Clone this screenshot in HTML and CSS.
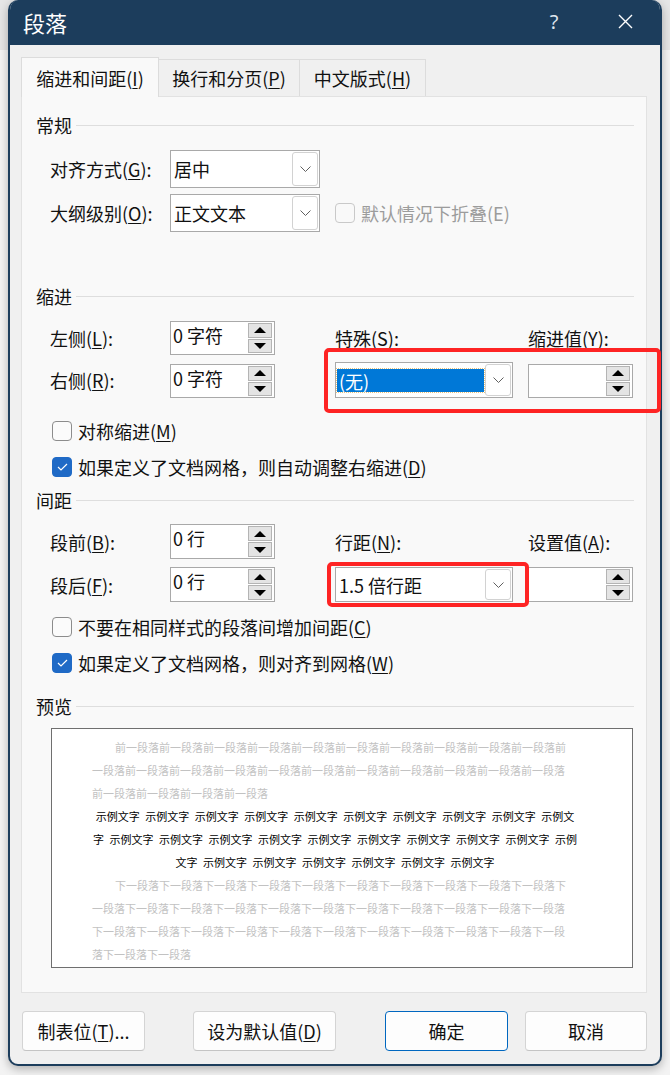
FILE: index.html
```html
<!DOCTYPE html>
<html lang="zh-CN">
<head>
    <meta charset="UTF-8">
    <meta name="viewport" content="width=device-width, initial-scale=1.0">
    <title>段落</title>
    <link rel="stylesheet" href="styles.css">
</head>
<body>
    <div class="dialog">
        <!-- Title bar -->
        <div class="titlebar">
            <span class="title">段落</span>
            <span class="title-btn help">?</span>
            <span class="title-btn close">
                <svg width="15" height="15" viewBox="0 0 15 15"><path d="M1 1 L14 14 M14 1 L1 14" stroke="#fff" stroke-width="1.4" fill="none"/></svg>
            </span>
        </div>

        <div class="tabs">
            <div class="tab active">缩进和间距(<u>I</u>)</div>
            <div class="tab">换行和分页(<u>P</u>)</div>
            <div class="tab">中文版式(<u>H</u>)</div>
        </div>

        <div class="panel">
            <!-- 常规 -->
            <div class="sec-title first">常规</div>
            <div class="grid-general">
                <span class="label">对齐方式(<u>G</u>):</span>
                <div class="combo">
                    <span class="combo-text">居中</span>
                    <span class="drop"><svg width="11" height="6" viewBox="0 0 11 6"><path d="M0.5 0.5 L5.5 5.5 L10.5 0.5" fill="none" stroke="#606060" stroke-width="1"/></svg></span>
                </div>
                <span></span>
                <span class="label">大纲级别(<u>O</u>):</span>
                <div class="combo">
                    <span class="combo-text">正文文本</span>
                    <span class="drop"><svg width="11" height="6" viewBox="0 0 11 6"><path d="M0.5 0.5 L5.5 5.5 L10.5 0.5" fill="none" stroke="#606060" stroke-width="1"/></svg></span>
                </div>
                <div class="check disabled collapse">
                    <span class="box"></span>
                    <span>默认情况下折叠(E)</span>
                </div>
            </div>

            <!-- 缩进 -->
            <div class="sec-title indent-title">缩进</div>
            <div class="grid-fields indent-grid">
                <span class="label">左侧(<u>L</u>):</span>
                <div class="spin">
                    <span class="spin-text">0 字符</span>
                    <span class="spin-btns"><span class="up"></span><span class="down"></span></span>
                </div>
                <span class="label">特殊(<u>S</u>):</span>
                <span class="label">缩进值(<u>Y</u>):</span>

                <span class="label">右侧(<u>R</u>):</span>
                <div class="spin">
                    <span class="spin-text">0 字符</span>
                    <span class="spin-btns"><span class="up"></span><span class="down"></span></span>
                </div>
                <div class="combo wide">
                    <span class="combo-text selected">(无)</span>
                    <span class="drop"><svg width="11" height="6" viewBox="0 0 11 6"><path d="M0.5 0.5 L5.5 5.5 L10.5 0.5" fill="none" stroke="#606060" stroke-width="1"/></svg></span>
                </div>
                <div class="spin">
                    <span class="spin-text"></span>
                    <span class="spin-btns"><span class="up"></span><span class="down"></span></span>
                </div>
            </div>
            <div class="checks indent-checks">
                <div class="check">
                    <span class="box"></span>
                    <span>对称缩进(<u>M</u>)</span>
                </div>
                <div class="check">
                    <span class="box on"><svg width="11" height="8" viewBox="0 0 11 8"><path d="M1 4 L4 7 L10 1" fill="none" stroke="#fff" stroke-width="1.2"/></svg></span>
                    <span>如果定义了文档网格，则自动调整右缩进(<u>D</u>)</span>
                </div>
            </div>

            <!-- 间距 -->
            <div class="sec-title spacing-title">间距</div>
            <div class="grid-fields spacing-grid">
                <span class="label">段前(<u>B</u>):</span>
                <div class="spin">
                    <span class="spin-text">0 行</span>
                    <span class="spin-btns"><span class="up"></span><span class="down"></span></span>
                </div>
                <span class="label">行距(<u>N</u>):</span>
                <span class="label">设置值(<u>A</u>):</span>

                <span class="label">段后(<u>F</u>):</span>
                <div class="spin">
                    <span class="spin-text">0 行</span>
                    <span class="spin-btns"><span class="up"></span><span class="down"></span></span>
                </div>
                <div class="combo wide">
                    <span class="combo-text">1.5 倍行距</span>
                    <span class="drop"><svg width="11" height="6" viewBox="0 0 11 6"><path d="M0.5 0.5 L5.5 5.5 L10.5 0.5" fill="none" stroke="#606060" stroke-width="1"/></svg></span>
                </div>
                <div class="spin">
                    <span class="spin-text"></span>
                    <span class="spin-btns"><span class="up"></span><span class="down"></span></span>
                </div>
            </div>
            <div class="checks spacing-checks">
                <div class="check">
                    <span class="box"></span>
                    <span>不要在相同样式的段落间增加间距(<u>C</u>)</span>
                </div>
                <div class="check">
                    <span class="box on"><svg width="11" height="8" viewBox="0 0 11 8"><path d="M1 4 L4 7 L10 1" fill="none" stroke="#fff" stroke-width="1.2"/></svg></span>
                    <span>如果定义了文档网格，则对齐到网格(<u>W</u>)</span>
                </div>
            </div>

            <!-- 预览 -->
            <div class="sec-title preview-title">预览</div>
            <div class="preview">
                <div class="pv-line ghost indent">前一段落前一段落前一段落前一段落前一段落前一段落前一段落前一段落前一段落前一段落前</div>
                <div class="pv-line ghost">一段落前一段落前一段落前一段落前一段落前一段落前一段落前一段落前一段落前一段落前一段落</div>
                <div class="pv-line ghost">前一段落前一段落前一段落前一段落</div>
                <div class="pv-line sample">示例文字&ensp;示例文字&ensp;示例文字&ensp;示例文字&ensp;示例文字&ensp;示例文字&ensp;示例文字&ensp;示例文字&ensp;示例文字&ensp;示例文</div>
                <div class="pv-line sample">字&ensp;示例文字&ensp;示例文字&ensp;示例文字&ensp;示例文字&ensp;示例文字&ensp;示例文字&ensp;示例文字&ensp;示例文字&ensp;示例文字&ensp;示例</div>
                <div class="pv-line sample">文字&ensp;示例文字&ensp;示例文字&ensp;示例文字&ensp;示例文字&ensp;示例文字&ensp;示例文字</div>
                <div class="pv-line ghost indent">下一段落下一段落下一段落下一段落下一段落下一段落下一段落下一段落下一段落下一段落下</div>
                <div class="pv-line ghost">一段落下一段落下一段落下一段落下一段落下一段落下一段落下一段落下一段落下一段落下一段落</div>
                <div class="pv-line ghost">下一段落下一段落下一段落下一段落下一段落下一段落下一段落下一段落下一段落下一段落下一段</div>
                <div class="pv-line ghost">落下一段落下一段落</div>
            </div>
        </div>

        <div class="buttons">
            <button class="btn tabs-btn">制表位(<u>T</u>)...</button>
            <button class="btn default-btn">设为默认值(<u>D</u>)</button>
            <button class="btn ok-btn">确定</button>
            <button class="btn cancel-btn">取消</button>
        </div>
    </div>

    <!-- annotation boxes drawn over the dialog -->
    <div class="mark mark-special"></div>
    <div class="mark mark-line"></div>
</body>
</html>
```

FILE: styles.css
```css
/* General styles */
* {
    box-sizing: border-box;
}

body {
    margin: 0;
    width: 670px;
    height: 1075px;
    position: relative;
    overflow: hidden;
    background: linear-gradient(#e6e6e6 0, #e6e6e6 50px, #f3f3f3 50px);
    font-family: "Noto Sans CJK SC", "Microsoft YaHei", sans-serif;
    font-size: 18px;
    color: #111;
}

u {
    text-decoration-thickness: 1px;
    text-underline-offset: 2px;
}

.dialog {
    margin-left: 8px;
    width: 654px;
    height: 1066px;
    background: #f0f0f0;
    border: 2px solid #1c3d5c;
    border-top: none;
    border-radius: 10px;
    box-shadow: 0 3px 10px rgba(0, 0, 0, 0.28);
    overflow: hidden;
}

/* Title bar */
.titlebar {
    height: 45px;
    background: #1c3d5c;
    display: flex;
    align-items: center;
    padding: 0 12px 2px 13px;
    color: #fff;
}

.title {
    font-size: 22px;
    line-height: 1;
}

.title-btn {
    width: 46px;
    height: 30px;
    display: flex;
    align-items: center;
    justify-content: center;
}

.help {
    margin-left: auto;
    font-family: "Noto Sans", "DejaVu Sans", sans-serif;
    font-size: 20px;
    color: #dfe6ee;
}

.close {
    margin-left: 25px;
}

/* Tabs */
.tabs {
    display: flex;
    align-items: flex-end;
    margin: 12px 0 0 11px;
    height: 39px;
}

.tab {
    height: 37px;
    display: flex;
    align-items: center;
    justify-content: center;
    background: #f0f0f0;
    border: 1px solid #dcdcdc;
    border-bottom: none;
}

.tab:nth-child(1) { width: 138px; }
.tab:nth-child(2) { width: 141px; border-left: none; }
.tab:nth-child(3) { width: 126px; border-left: none; }

.tab.active {
    height: 40px;
    margin-bottom: -1px;
    background: #f9f9f9;
    position: relative;
    z-index: 1;
}

/* Tab page */
.panel {
    margin-left: 11px;
    width: 626px;
    height: 897px;
    background: #f9f9f9;
    border: 1px solid #e2e2e2;
    padding: 0 12px 0 14px;
    display: flex;
    flex-direction: column;
}

.sec-title {
    height: 24px;
    display: flex;
    align-items: center;
    gap: 4px;
    line-height: 24px;
}

.sec-title::after {
    content: "";
    flex: 1;
    height: 1px;
    background: #dedede;
}

.sec-title.first { margin-top: 16px; }
.sec-title.indent-title { margin-top: 52px; }
.sec-title.spacing-title { margin-top: 11px; }
.sec-title.preview-title { margin-top: 21px; }

.label {
    display: flex;
    align-items: center;
    white-space: nowrap;
    line-height: 24px;
}

/* 常规 */
.grid-general {
    margin: 13px 0 0 14px;
    display: grid;
    grid-template-columns: 120px 150px 1fr;
    grid-template-rows: 38px 38px;
    row-gap: 6px;
}

/* 缩进 / 间距 */
.grid-fields {
    margin-left: 14px;
    display: grid;
    grid-template-columns: 120px 165px 193px 105px;
}

.indent-grid {
    margin-top: 13px;
    grid-template-rows: 34px 36px;
    row-gap: 7px;
}

.spacing-grid {
    margin-top: 12px;
    grid-template-rows: 35px 35px;
    row-gap: 8px;
}

/* Combo box */
.combo {
    display: flex;
    background: #fff;
    border: 1px solid #a9a9a9;
    height: 100%;
}

.combo.wide {
    width: 178px;
}

.combo-text {
    flex: 1;
    display: flex;
    align-items: center;
    padding-left: 3px;
    line-height: 24px;
    white-space: nowrap;
}

.combo-text.selected {
    margin: 6px 1px 5px 1px;
    padding-left: 2px;
    background: #0078d7;
    color: #fff;
    outline: 1px dotted #e9c27a;
}

.drop {
    width: 26px;
    margin: 1px 1px 1px 0;
    border: 1px solid #d2d2d2;
    border-radius: 3px;
    background: #fff;
    display: flex;
    align-items: center;
    justify-content: center;
}

/* Spin box */
.spin {
    width: 105px;
    height: 100%;
    display: flex;
    background: #fff;
    border: 1px solid #a9a9a9;
}

.indent-grid .spin {
    height: 34px;
    align-self: end;
}

.spin-text {
    flex: 1;
    padding: 1px 0 0 2px;
    line-height: 24px;
    white-space: nowrap;
}

.spin-btns {
    width: 24px;
    margin: 1px 2px 1px 0;
    display: flex;
    flex-direction: column;
    gap: 1px;
}

.spin-btns span {
    flex: 1;
    background: #e4e4e4;
    border: 1px solid #b4b4b4;
    display: flex;
    align-items: center;
    justify-content: center;
}

.spin-btns .up::after {
    content: "";
    border-left: 6px solid transparent;
    border-right: 6px solid transparent;
    border-bottom: 6px solid #000;
}

.spin-btns .down::after {
    content: "";
    border-left: 6px solid transparent;
    border-right: 6px solid transparent;
    border-top: 6px solid #000;
}

/* Checkboxes */
.checks {
    margin-left: 16px;
    display: flex;
    flex-direction: column;
    gap: 16px;
}

.indent-checks { margin-top: 23px; }
.spacing-checks { margin-top: 15px; }

.check {
    height: 20px;
    display: flex;
    align-items: center;
    gap: 6px;
    white-space: nowrap;
    line-height: 24px;
}

.box {
    width: 20px;
    height: 20px;
    border: 1px solid #8c8c8c;
    border-radius: 4px;
    background: #fbfbfb;
    display: flex;
    align-items: center;
    justify-content: center;
}

.box.on {
    background: #1f6ac6;
    border-color: #1f6ac6;
}

.check.disabled {
    color: #9c9c9c;
}

.check.disabled .box {
    border-color: #c9c9c9;
    background: #f9f9f9;
}

.check.collapse {
    align-self: center;
    margin-left: 15px;
}

/* Preview */
.preview {
    margin: 10px 0 0 15px;
    width: 582px;
    height: 240px;
    background: #fff;
    border: 1px solid #6f6f6f;
    padding: 7px 54px 0 40px;
    font-size: 11px;
    line-height: 23px;
}

.pv-line {
    white-space: nowrap;
    height: 23px;
}

.pv-line.ghost {
    color: #c2c2c2;
}

.pv-line.indent {
    padding-left: 23px;
}

.pv-line.sample {
    color: #000;
    text-align: center;
}

/* Buttons */
.buttons {
    display: flex;
    margin: 18px 0 0 12px;
}

.btn {
    height: 40px;
    padding: 0;
    font-family: inherit;
    font-size: 18px;
    color: #111;
    background: #fdfdfd;
    border: 1px solid #d4d4d4;
    border-bottom-color: #c4c4c4;
    border-radius: 4px;
    line-height: 24px;
}

.tabs-btn { width: 123px; }
.default-btn { width: 143px; margin-left: 48px; }
.ok-btn { width: 123px; margin-left: 49px; border-color: #0067c0; }
.cancel-btn { width: 122px; margin-left: 17px; }

/* Red annotation boxes */
.mark {
    position: absolute;
    border: 4px solid #fe2424;
    border-radius: 5px;
    z-index: 5;
}

.mark-special {
    left: 324px;
    top: 348px;
    width: 337px;
    height: 65px;
}

.mark-line {
    left: 327px;
    top: 562px;
    width: 202px;
    height: 45px;
}
```
